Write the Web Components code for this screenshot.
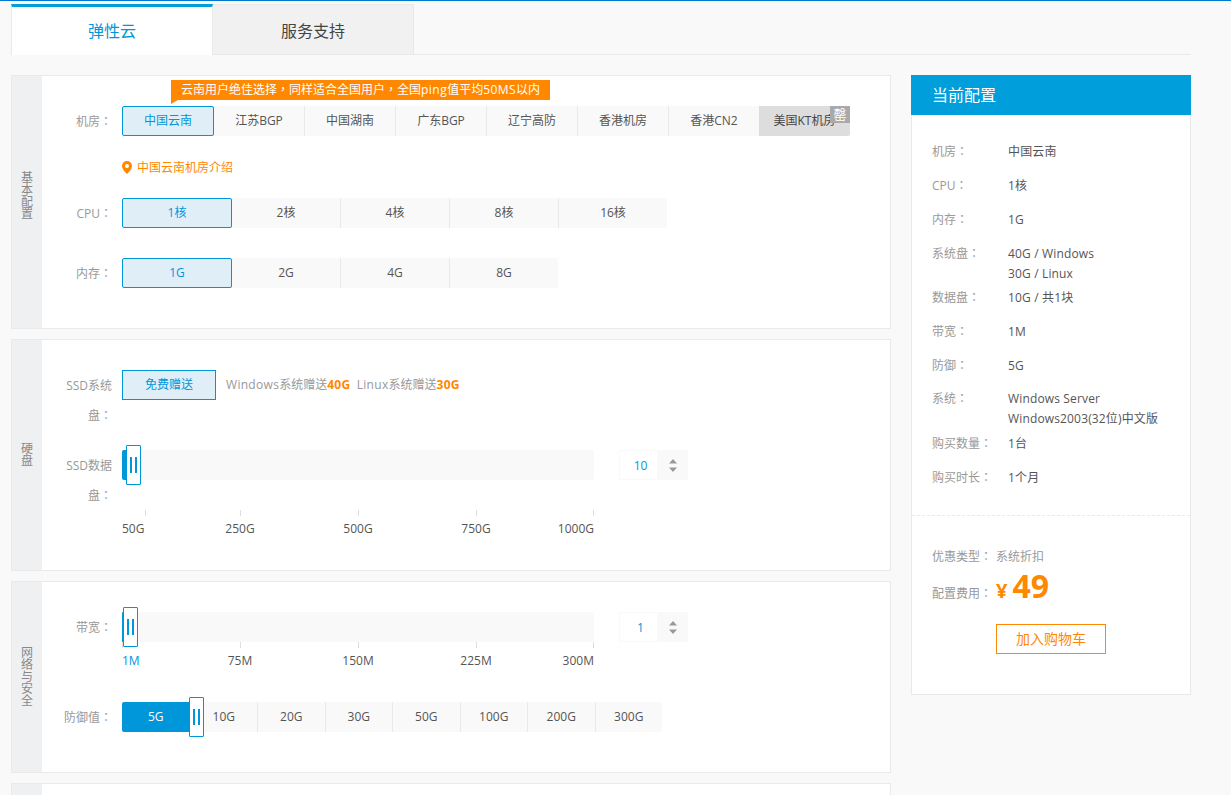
<!DOCTYPE html>
<html lang="zh-CN">
<head>
<meta charset="utf-8">
<title>弹性云</title>
<style>
    html, body { margin: 0; height: 795px; overflow: hidden; }
    body {
        background: #f9f9f9;
        border-top: 1px solid #0078d0;
        box-sizing: border-box;
        color: #555;
        font: 12px/20px "Open Sans", "Noto Sans CJK SC", sans-serif;
    }
    .page { margin-left: 11px; width: 1180px; padding-top: 3px; }
    .columns { display: flex; gap: 20px; align-items: flex-start; margin-top: 20px; }
    .left { width: 880px; display: flex; flex-direction: column; gap: 10px; }
    .note { color: #999; margin-left: 11px; line-height: 30px; white-space: pre; }
    .note b { color: #ff8800; }
    .wide { letter-spacing: .3px; }
    .wider { letter-spacing: .45px; }
    .punct { font-family: "Noto Sans CJK TC", sans-serif; line-height: 1; }
</style>
</head>
<body>
<div class="page">
    <cfg-tabs></cfg-tabs>
    <div class="columns">
        <div class="left">
            <cfg-panel title="基本配置" style="--title-shift: 12px; --pad-bottom: 40px">
                <cfg-row label="机房">
                    <cfg-options width="91">
                        <cfg-banner>云南用户绝佳选择<span class="punct" lang="zh-TW">，</span>同样适合全国用户<span class="punct" lang="zh-TW">，</span>全国<span class="wider">ping</span>值平均<span class="wider">50MS</span>以内</cfg-banner>
                        <cfg-option selected>中国云南</cfg-option>
                        <cfg-option>江苏BGP</cfg-option>
                        <cfg-option>中国湖南</cfg-option>
                        <cfg-option>广东BGP</cfg-option>
                        <cfg-option>辽宁高防</cfg-option>
                        <cfg-option>香港机房</cfg-option>
                        <cfg-option>香港CN2</cfg-option>
                        <cfg-option soldout>美国KT机房</cfg-option>
                    </cfg-options>
                </cfg-row>
                <cfg-location>中国云南机房介绍</cfg-location>
                <cfg-row label="CPU">
                    <cfg-options width="109">
                        <cfg-option selected>1核</cfg-option>
                        <cfg-option>2核</cfg-option>
                        <cfg-option>4核</cfg-option>
                        <cfg-option>8核</cfg-option>
                        <cfg-option>16核</cfg-option>
                    </cfg-options>
                </cfg-row>
                <cfg-row label="内存" style="--row-bottom: 0">
                    <cfg-options width="109">
                        <cfg-option selected>1G</cfg-option>
                        <cfg-option>2G</cfg-option>
                        <cfg-option>4G</cfg-option>
                        <cfg-option>8G</cfg-option>
                    </cfg-options>
                </cfg-row>
            </cfg-panel>

            <cfg-panel title="硬盘" style="--pad-bottom: 34px">
                <cfg-row label="SSD系统<br>盘" style="--row-bottom: 20px">
                    <cfg-options width="93">
                        <cfg-option selected plain>免费赠送</cfg-option>
                    </cfg-options>
                    <span class="note"><span class="wide">Windows</span>系统赠送<b class="wide">40G</b>  <span class="wide">Linux</span>系统赠送<b class="wide">30G</b></span>
                </cfg-row>
                <cfg-row label="SSD数据<br>盘" style="--row-bottom: 0">
                    <cfg-slider fill="5" handle="4" scale-top="30" first-tick="23"
                        marks="50G,250G,500G,750G,1000G"></cfg-slider>
                    <cfg-stepper value="10"></cfg-stepper>
                </cfg-row>
            </cfg-panel>

            <cfg-panel title="网络与安全" style="--pad-bottom: 40px">
                <cfg-row label="带宽" style="--row-bottom: 34px">
                    <cfg-slider fill="1" handle="1" active-first marks="1M,75M,150M,225M,300M"></cfg-slider>
                    <cfg-stepper value="1"></cfg-stepper>
                </cfg-row>
                <cfg-row label="防御值" style="--row-bottom: 0">
                    <cfg-options width="67.5">
                        <cfg-option filled>5G</cfg-option>
                        <cfg-option>10G</cfg-option>
                        <cfg-option>20G</cfg-option>
                        <cfg-option>30G</cfg-option>
                        <cfg-option>50G</cfg-option>
                        <cfg-option>100G</cfg-option>
                        <cfg-option>200G</cfg-option>
                        <cfg-option>300G</cfg-option>
                        <cfg-handle at="67"></cfg-handle>
                    </cfg-options>
                </cfg-row>
            </cfg-panel>

            <cfg-panel style="--pad-bottom: 60px"></cfg-panel>
        </div>
        <cfg-summary></cfg-summary>
    </div>
</div>

<script>
const FONT = `"Open Sans", "Noto Sans CJK SC", sans-serif`;
const BLUE = "#0096da";
// the colon sits in the middle of its em box only in the TC forms
const COLON = `<span class="colon" lang="zh-TW">：</span>`;

class CfgTabs extends HTMLElement {
    constructor() {
        super();
        this.attachShadow({ mode: "open" });
    }

    connectedCallback() {
        this.shadowRoot.innerHTML = `
            <style>
                :host { display: flex; height: 50px; border-bottom: 1px solid #e9e9e9; font: 16px/50px ${FONT}; }
                .tab { width: 200px; text-align: center; box-sizing: border-box; border: 1px solid #e9e9e9; border-bottom: 0; }
                .on { width: 202px; background: #fff; color: ${BLUE}; border-top: 3px solid #009fdb; line-height: 48px; margin-bottom: -1px; height: 51px; }
                .off { background: #f1f1f1; color: #444; border-left: 0; width: 201px; line-height: 52px; }
            </style>
            <div class="tab on">弹性云</div>
            <div class="tab off">服务支持</div>
        `;
    }
}

class CfgPanel extends HTMLElement {
    constructor() {
        super();
        this.attachShadow({ mode: "open" });
    }

    connectedCallback() {
        let title = this.getAttribute("title") || "";
        this.removeAttribute("title");
        this.shadowRoot.innerHTML = `
            <style>
                :host { display: flex; background: #fff; border: 1px solid #e9e9e9; }
                .title {
                    width: 30px;
                    flex: none;
                    background: #eff0f2;
                    color: #888;
                    display: flex;
                    align-items: center;
                    justify-content: center;
                    text-align: center;
                    line-height: 12px;
                    box-sizing: border-box;
                    padding-bottom: var(--title-shift, 0);
                }
                .title span { width: 12px; display: block; word-break: break-all; }
                .body { flex: 1; padding: 30px 0 var(--pad-bottom, 30px) 20px; }
            </style>
            <div class="title"><span>${title}</span></div>
            <div class="body"><slot></slot></div>
        `;
    }
}

class CfgRow extends HTMLElement {
    constructor() {
        super();
        this.attachShadow({ mode: "open" });
    }

    connectedCallback() {
        this.shadowRoot.innerHTML = `
            <style>
                :host { display: flex; align-items: flex-start; margin-bottom: var(--row-bottom, 30px); }
                .label { width: 50px; flex: none; margin: 1px 10px -1px 0; text-align: right; color: #999; line-height: 30px; }
                .colon { font-family: "Noto Sans CJK TC", sans-serif; line-height: 1; }
            </style>
            <div class="label">${this.getAttribute("label")}${COLON}</div>
            <slot></slot>
        `;
    }
}

class CfgOptions extends HTMLElement {
    constructor() {
        super();
        this.attachShadow({ mode: "open" });
    }

    connectedCallback() {
        this.style.setProperty("--cell", this.getAttribute("width") + "px");
        this.shadowRoot.innerHTML = `
            <style>
                :host { display: flex; position: relative; height: 30px; }
            </style>
            <slot></slot>
        `;
    }
}

class CfgOption extends HTMLElement {
    constructor() {
        super();
        this.attachShadow({ mode: "open" });
    }

    connectedCallback() {
        this.shadowRoot.innerHTML = `
            <style>
                :host {
                    display: block;
                    position: relative;
                    flex: none;
                    box-sizing: border-box;
                    width: var(--cell);
                    height: 30px;
                    line-height: 29px;
                    text-align: center;
                    white-space: nowrap;
                    color: #555;
                    background: #f9f9f9;
                    border-left: 1px solid #e9e9e9;
                }
                :host(:first-of-type) { border-left: 0; }
                :host(:last-of-type) { border-radius: 0 2px 2px 0; }
                :host([selected]) {
                    width: calc(var(--cell) + 1px);
                    margin-right: -1px;
                    z-index: 1;
                    color: ${BLUE};
                    background: #e0eff7;
                    border: 1px solid ${BLUE};
                    border-radius: 2px;
                    line-height: 27px;
                }
                :host([plain]) { border-radius: 0; }
                :host([filled]) { color: #fff; background: ${BLUE}; border-radius: 2px 0 0 2px; }
                :host([soldout]) { background: #ddd; color: #444; border-left: 0; }
                .badge {
                    position: absolute;
                    top: 0;
                    right: 0;
                    width: 20px;
                    height: 17px;
                    line-height: 17px;
                    background: #a9a9a9;
                    color: #fff;
                    font-size: 13px;
                    text-align: center;
                }
            </style>
            <slot></slot>
            ${this.hasAttribute("soldout") ? `<span class="badge">罄</span>` : ""}
        `;
    }
}

class CfgBanner extends HTMLElement {
    constructor() {
        super();
        this.attachShadow({ mode: "open" });
    }

    connectedCallback() {
        this.shadowRoot.innerHTML = `
            <style>
                :host {
                    position: absolute;
                    left: 49px;
                    top: -26px;
                    width: 379px;
                    height: 20px;
                    box-sizing: border-box;
                    padding-left: 10px;
                    line-height: 19px;
                    white-space: nowrap;
                    background: #ff8800;
                    color: #fff;
                }
                :host::after {
                    content: "";
                    position: absolute;
                    left: 0;
                    top: 20px;
                    border-top: 4px solid #ff8800;
                    border-right: 7px solid transparent;
                }
            </style>
            <slot></slot>
        `;
    }
}

class CfgLocation extends HTMLElement {
    constructor() {
        super();
        this.attachShadow({ mode: "open" });
    }

    connectedCallback() {
        this.shadowRoot.innerHTML = `
            <style>
                :host {
                    display: flex;
                    align-items: center;
                    gap: 5px;
                    height: 18px;
                    margin: -8px 0 22px 60px;
                    color: #ff8800;
                }
                svg { display: block; }
                slot { display: block; padding-top: 2px; }
            </style>
            <svg width="10" height="13" viewBox="0 0 10 13">
                <path fill="#ff8800" d="M5 0a5 5 0 0 1 5 5c0 3-3 6-5 8C3 11 0 8 0 5a5 5 0 0 1 5-5z"/>
                <circle cx="5" cy="5" r="2" fill="#fff"/>
            </svg>
            <slot></slot>
        `;
    }
}

class CfgHandle extends HTMLElement {
    constructor() {
        super();
        this.attachShadow({ mode: "open" });
    }

    connectedCallback() {
        this.style.left = this.getAttribute("at") + "px";
        this.shadowRoot.innerHTML = `
            <style>
                :host {
                    position: absolute;
                    top: -5px;
                    z-index: 2;
                    width: 15px;
                    height: 40px;
                    box-sizing: border-box;
                    background: #fff;
                    border: 1px solid ${BLUE};
                    border-radius: 1px;
                    display: flex;
                    justify-content: center;
                    align-items: center;
                    gap: 3px;
                }
                i { width: 2px; height: 16px; background: ${BLUE}; }
            </style>
            <i></i><i></i>
        `;
    }
}

class CfgSlider extends HTMLElement {
    constructor() {
        super();
        this.attachShadow({ mode: "open" });
    }

    connectedCallback() {
        let marks = this.getAttribute("marks").split(",");
        let firstTick = this.getAttribute("first-tick") || 0;
        let activeFirst = this.hasAttribute("active-first");

        this.shadowRoot.innerHTML = `
            <style>
                :host { display: block; width: 472px; }
                .track { position: relative; height: 30px; background: #f9f9f9; border-radius: 2px; }
                .fill { width: ${this.getAttribute("fill")}px; height: 30px; background: ${BLUE}; border-radius: 2px 0 0 2px; }
                .scale {
                    display: grid;
                    grid-template-columns: 59px 118px 118px 118px 59px;
                    margin-top: ${this.getAttribute("scale-top") || 0}px;
                }
                .mark { display: flex; flex-direction: column; align-items: center; color: #555; line-height: 14px; white-space: nowrap; }
                .mark:first-child { align-items: flex-start; }
                .mark:last-child { align-items: flex-end; }
                .tick { width: 1px; height: 6px; background: #ddd; margin-bottom: 6px; }
                .mark:first-child .tick { margin-left: ${firstTick}px; }
                .active { color: ${BLUE}; }
            </style>
            <div class="track">
                <div class="fill"></div>
                <cfg-handle at="${this.getAttribute("handle")}"></cfg-handle>
            </div>
            <div class="scale">
                ${marks.map((m, i) => `
                    <div class="mark ${activeFirst && i === 0 ? "active" : ""}"><span class="tick"></span>${m}</div>
                `).join("")}
            </div>
        `;
    }
}

class CfgStepper extends HTMLElement {
    constructor() {
        super();
        this.attachShadow({ mode: "open" });
    }

    connectedCallback() {
        this.shadowRoot.innerHTML = `
            <style>
                :host {
                    display: flex;
                    margin-left: 25px;
                    width: 69px;
                    height: 30px;
                    flex: none;
                }
                .value {
                    width: 39px;
                    box-sizing: border-box;
                    border: 1px solid #f9f9f9;
                    padding-left: 4px;
                    text-align: center;
                    color: ${BLUE};
                    line-height: 29px;
                }
                .arrows { flex: 1; background: #f9f9f9; display: flex; align-items: center; justify-content: center; }
                svg { display: block; }
            </style>
            <div class="value">${this.getAttribute("value")}</div>
            <div class="arrows">
                <svg width="8" height="13" viewBox="0 0 8 13">
                    <path fill="#999" d="M4 0l4 4.500H0zM0 8.500h8L4 13z"/>
                </svg>
            </div>
        `;
    }
}

class CfgSummary extends HTMLElement {
    constructor() {
        super();
        this.attachShadow({ mode: "open" });
    }

    connectedCallback() {
        let rows = [
            ["机房", ["中国云南"]],
            ["CPU", ["1核"]],
            ["内存", ["1G"]],
            ["系统盘", ["40G / Windows", "30G / Linux"]],
            ["数据盘", ["10G / 共1块"]],
            ["带宽", ["1M"]],
            ["防御", ["5G"]],
            ["系统", ["Windows Server", "Windows2003(32位)中文版"], "sys"],
            ["购买数量", ["1台"]],
            ["购买时长", ["1个月"]],
        ];

        this.shadowRoot.innerHTML = `
            <style>
                :host { display: block; width: 280px; flex: none; }
                .head { height: 40px; background: #009fdb; color: #fff; font-size: 16px; line-height: 40px; padding-left: 21px; }
                .box { background: #fff; border: 1px solid #e9e9e9; border-top: 0; height: 580px; box-sizing: border-box; }
                .list { padding: 27px 20px 0; height: 401px; box-sizing: border-box; border-bottom: 1px dashed #e9e9e9; }
                .row { display: flex; height: 34px; line-height: 20px; }
                .row.two { height: 44px; }
                .row.sys { height: 45px; margin-top: -1px; }
                .k { width: 76px; flex: none; color: #999; }
                .v { color: #555; white-space: nowrap; letter-spacing: .15px; }
                .colon { font-family: "Noto Sans CJK TC", sans-serif; line-height: 1; }
                .price { padding: 31px 20px 0; }
                .line { display: flex; align-items: baseline; color: #999; }
                .line .k { width: 64px; }
                .cost { margin-top: -1px; height: 40px; }
                .yen { color: #ff8800; font-size: 20px; font-weight: 700; margin-right: 5px; }
                .num { color: #ff8800; font-size: 32px; font-weight: 700; line-height: 40px; }
                .buy {
                    display: block;
                    width: 110px;
                    height: 30px;
                    box-sizing: border-box;
                    margin: 18px 0 0 64px;
                    border: 1px solid #ff8800;
                    color: #ff8800;
                    font-size: 14px;
                    line-height: 28px;
                    text-align: center;
                }
            </style>
            <div class="head">当前配置</div>
            <div class="box">
                <div class="list">
                    ${rows.map(([k, v, cls]) => `
                        <div class="row ${v.length > 1 ? "two" : ""} ${cls || ""}">
                            <span class="k">${k}${COLON}</span>
                            <span class="v">${v.join("<br>")}</span>
                        </div>
                    `).join("")}
                </div>
                <div class="price">
                    <div class="line"><span class="k">优惠类型${COLON}</span><span>系统折扣</span></div>
                    <div class="line cost"><span class="k">配置费用${COLON}</span><span class="yen">¥</span><span class="num">49</span></div>
                    <span class="buy">加入购物车</span>
                </div>
            </div>
        `;
    }
}

customElements.define("cfg-tabs", CfgTabs);
customElements.define("cfg-panel", CfgPanel);
customElements.define("cfg-row", CfgRow);
customElements.define("cfg-options", CfgOptions);
customElements.define("cfg-option", CfgOption);
customElements.define("cfg-banner", CfgBanner);
customElements.define("cfg-location", CfgLocation);
customElements.define("cfg-handle", CfgHandle);
customElements.define("cfg-slider", CfgSlider);
customElements.define("cfg-stepper", CfgStepper);
customElements.define("cfg-summary", CfgSummary);
</script>
</body>
</html>
